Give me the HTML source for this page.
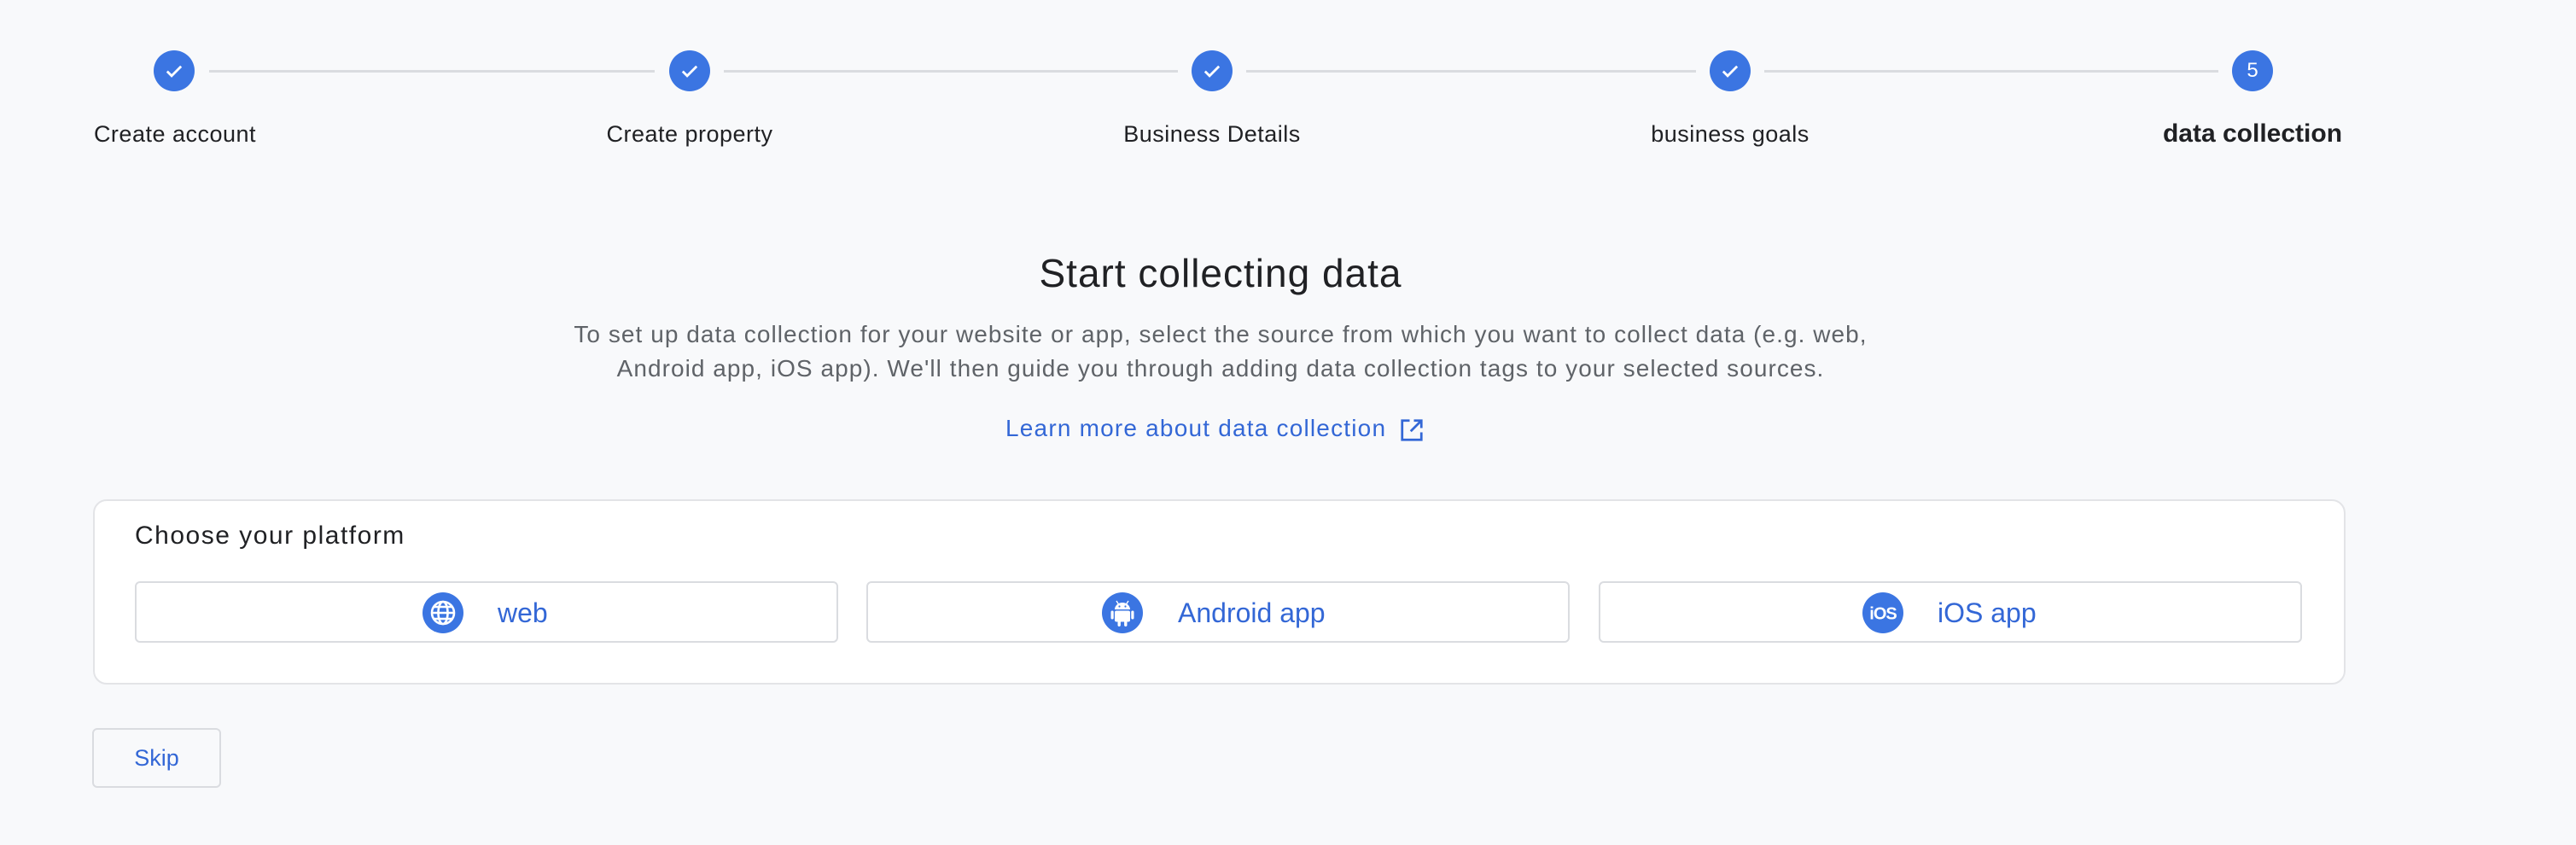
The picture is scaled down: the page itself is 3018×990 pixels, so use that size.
<!DOCTYPE html>
<html><head><meta charset="utf-8"><style>
*{box-sizing:border-box;margin:0;padding:0}
body{width:3018px;height:990px;background:#f8f9fb;font-family:"Liberation Sans",sans-serif;position:relative;overflow:hidden}
.line{position:absolute;top:82px;height:3px;background:#dadce0}
.c{position:absolute;top:59px;width:48px;height:48px;border-radius:50%;background:#3b75e2;color:#fff;display:flex;align-items:center;justify-content:center;font-size:24px}
.lbl{position:absolute;top:142px;width:400px;text-align:center;font-size:27px;color:#202124;letter-spacing:0.5px}
.card{position:absolute;left:109px;top:585px;width:2639px;height:217px;background:#fff;border:2px solid #e3e4e7;border-radius:16px}
.btn{position:absolute;top:681px;height:72px;width:824px;border:2px solid #dadce0;border-radius:6px;background:#fff}
.ico{position:absolute;top:694px;width:48px;height:48px}
.bt{position:absolute;top:697px;font-size:32px;color:#3367d6;line-height:42px}
</style></head><body>
<div class="line" style="left:245px;width:522px"></div>
<div class="line" style="left:848px;width:532px"></div>
<div class="line" style="left:1460px;width:527px"></div>
<div class="line" style="left:2067px;width:532px"></div>
<svg width="0" height="0" style="position:absolute"><defs><symbol id="ck" viewBox="0 0 24 24"><path d="M5 12.5l4.5 4.5L19 7.5" fill="none" stroke="#fff" stroke-width="2.4"/></symbol></defs></svg>
<div class="c" style="left:180px"><svg width="28" height="28"><use href="#ck"/></svg></div>
<div class="c" style="left:784px"><svg width="28" height="28"><use href="#ck"/></svg></div>
<div class="c" style="left:1396px"><svg width="28" height="28"><use href="#ck"/></svg></div>
<div class="c" style="left:2003px"><svg width="28" height="28"><use href="#ck"/></svg></div>
<div class="c" style="left:2615px">5</div>
<div class="lbl" style="left:5px">Create account</div>
<div class="lbl" style="left:608px">Create property</div>
<div class="lbl" style="left:1220px">Business Details</div>
<div class="lbl" style="left:1827px">business goals</div>
<div class="lbl" style="left:2439px;font-size:30px;font-weight:bold;top:140px;letter-spacing:0">data collection</div>

<div style="position:absolute;left:0;width:2860px;top:293px;text-align:center;font-size:46px;letter-spacing:1px;color:#202124">Start collecting data</div>
<div style="position:absolute;left:0;width:2860px;top:372px;text-align:center;font-size:28px;letter-spacing:1.05px;line-height:40px;color:#5f6368">To set up data collection for your website or app, select the source from which you want to collect data (e.g. web,<br>Android app, iOS app). We'll then guide you through adding data collection tags to your selected sources.</div>
<div style="position:absolute;left:1178px;top:486px;font-size:28px;letter-spacing:1.2px;color:#3367d6;white-space:nowrap">Learn more about data collection</div>
<svg style="position:absolute;left:1639px;top:489px" width="30" height="30" viewBox="0 0 24 24"><path d="M10 3H3v18h18v-7M14 3h7v7M21 3L11 13" fill="none" stroke="#3367d6" stroke-width="2.2"/></svg>

<div class="card"></div>
<div style="position:absolute;left:158px;top:611px;font-size:30px;letter-spacing:1.5px;color:#202124">Choose your platform</div>
<div class="btn" style="left:158px"></div>
<div class="btn" style="left:1015px"></div>
<div class="btn" style="left:1873px"></div>

<svg class="ico" style="left:495px" viewBox="0 0 48 48"><circle cx="24" cy="24" r="24" fill="#3b75e2"/><g fill="none" stroke="#fff" stroke-width="2.6"><circle cx="24" cy="24" r="13"/><ellipse cx="24" cy="24" rx="5.5" ry="13"/><path d="M11 24h26M13 17h22M13 31h22"/></g></svg>
<div class="bt" style="left:583px">web</div>

<svg class="ico" style="left:1291px" viewBox="0 0 48 48"><circle cx="24" cy="24" r="24" fill="#3b75e2"/><g fill="#fff"><path d="M15 20a9 8 0 0 1 18 0z"/><rect x="15" y="21.5" width="18" height="13" rx="2"/><rect x="10.5" y="21.5" width="3.2" height="10" rx="1.6"/><rect x="34.3" y="21.5" width="3.2" height="10" rx="1.6"/><rect x="18.5" y="33" width="3.4" height="7" rx="1.7"/><rect x="26.1" y="33" width="3.4" height="7" rx="1.7"/></g><path d="M17 10l2.5 4M31 10l-2.5 4" stroke="#fff" stroke-width="1.4"/><circle cx="20.5" cy="16.5" r="1.1" fill="#3b75e2"/><circle cx="27.5" cy="16.5" r="1.1" fill="#3b75e2"/></svg>
<div class="bt" style="left:1380px">Android app</div>

<svg class="ico" style="left:2182px" viewBox="0 0 48 48"><circle cx="24" cy="24" r="24" fill="#3b75e2"/><text x="24" y="31.5" text-anchor="middle" font-family="Liberation Sans,sans-serif" font-weight="bold" font-size="20" fill="#fff" letter-spacing="-1">iOS</text></svg>
<div class="bt" style="left:2270px">iOS app</div>

<div style="position:absolute;left:108px;top:853px;width:151px;height:70px;border:2px solid #dadce0;border-radius:6px;background:#f8f9fb"></div>
<div style="position:absolute;left:108px;top:853px;width:151px;height:70px;line-height:70px;text-align:center;font-size:27px;color:#3367d6">Skip</div>
</body></html>
